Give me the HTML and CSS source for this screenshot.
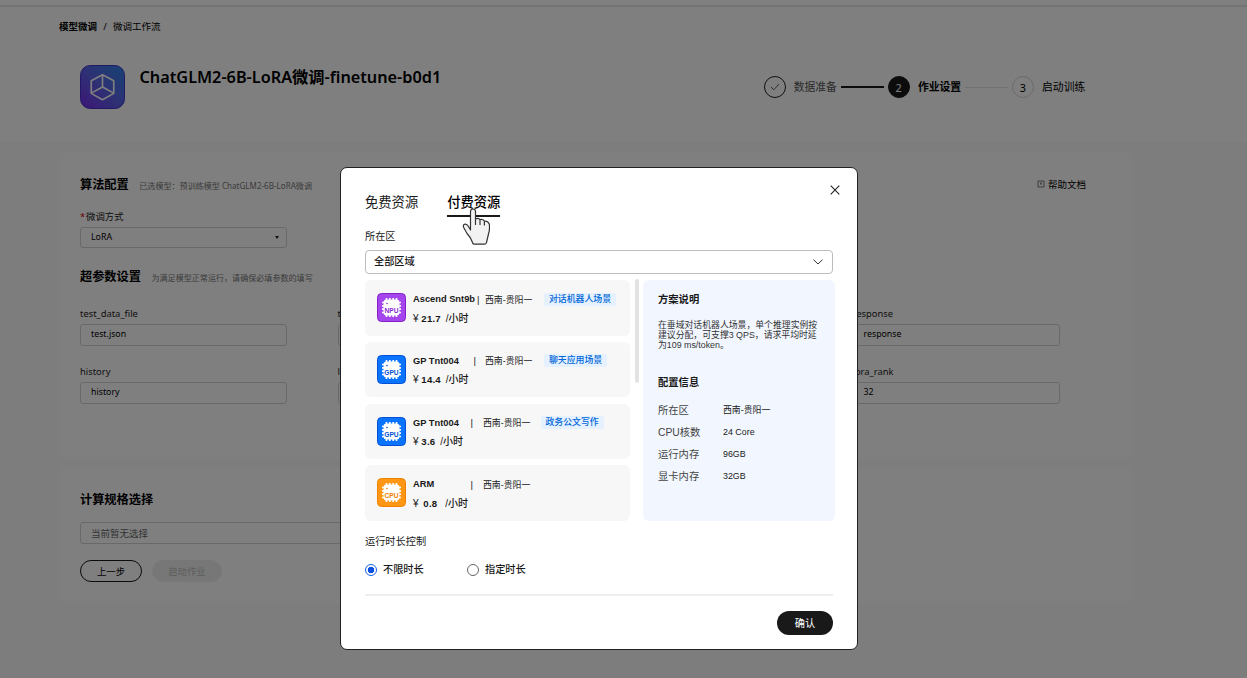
FILE: index.html
```html
<!DOCTYPE html>
<html lang="zh-CN">
<head>
    <meta charset="UTF-8">
    <meta name="viewport" content="width=device-width, initial-scale=1.0">
    <title>微调工作流</title>
    <link rel="stylesheet" href="styles.css">
</head>
<body>
    <div class="topbar"></div>
    <div class="header">
        <div class="breadcrumb"><b>模型微调</b><span class="sep">/</span><span>微调工作流</span></div>
        <div class="header-main">
            <svg class="logo" viewBox="0 0 46 45">
                <defs>
                    <linearGradient id="logoBg" x1="0" y1="1" x2="1" y2="0">
                        <stop offset="0" stop-color="#7a2cf0"/>
                        <stop offset="0.5" stop-color="#5c62e8"/>
                        <stop offset="1" stop-color="#2a86e8"/>
                    </linearGradient>
                </defs>
                <rect x="0.5" y="0.5" width="45" height="44" rx="10" fill="url(#logoBg)" stroke="#4030c8"/>
                <path d="M23 10 L34.500 16 V29 L23 35.500 L11.500 29 V16 Z M23 10 V22.500 M23 22.500 L12 28.500 M23 22.500 L34 28.500" fill="none" stroke="#fff" stroke-width="1.700" stroke-linejoin="round"/>
            </svg>
            <h1>ChatGLM2-6B-LoRA微调-finetune-b0d1</h1>
            <div class="steps">
                <div class="circle done"><svg viewBox="0 0 10 8"><path d="M1 4 L3.800 6.800 L9 1"/></svg></div>
                <span class="step-name gray">数据准备</span>
                <div class="line dark"></div>
                <div class="circle active">2</div>
                <span class="step-name bold">作业设置</span>
                <div class="line"></div>
                <div class="circle">3</div>
                <span class="step-name">启动训练</span>
            </div>
        </div>
    </div>

    <div class="card config">
        <div class="card-title">
            <h2>算法配置</h2><small>已选模型：预训练模型 ChatGLM2-6B-LoRA微调</small>
            <a class="help"><svg viewBox="0 0 8 8"><path d="M1 1 H7 V7 H1 Z M3 3 H5 M4 3 V5"/></svg>帮助文档</a>
        </div>
        <div class="field method">
            <label><i>*</i>微调方式</label>
            <div class="input select">LoRA<span class="caret"></span></div>
        </div>
        <div class="card-title params">
            <h2>超参数设置</h2><small>为满足模型正常运行，请确保必填参数的填写</small>
        </div>
        <div class="form-grid">
            <div class="field"><label>test_data_file</label><div class="input">test.json</div></div>
            <div class="field"><label>train_file</label><div class="input"></div></div>
            <div class="field last"><label>response</label><div class="input">response</div></div>
            <div class="field"><label>history</label><div class="input">history</div></div>
            <div class="field"><label>lr</label><div class="input"></div></div>
            <div class="field last"><label>lora_rank</label><div class="input">32</div></div>
        </div>
    </div>

    <div class="card spec">
        <h2>计算规格选择</h2>
        <div class="input wide">当前暂无选择</div>
        <div class="buttons">
            <button class="btn">上一步</button>
            <button class="btn disabled">启动作业</button>
        </div>
    </div>

    <div class="overlay">
        <div class="modal">
            <svg class="close" viewBox="0 0 10 10"><path d="M0.700 0.700 L9.300 9.300 M9.300 0.700 L0.700 9.300"/></svg>
            <div class="tabs">
                <div class="tab">免费资源</div>
                <div class="tab active">付费资源</div>
            </div>
            <svg class="hand" viewBox="0 0 28 38">
                <path d="M8.500 19 V3.500 Q8.500 1 11 1 Q13.500 1 13.500 3.500 V11 Q16 9.500 18 11.600 Q20.700 10.600 22.400 13 Q26 12.800 27.300 16 Q28 22 26.500 26 L24.500 34.500 Q24.200 36.200 22.500 36.200 H12 Q10.800 36.200 10.300 34 Q8.500 29 5 25.500 L1.700 19.500 Q0.500 16.500 3 16.200 Q5 16 6.500 18.500 L8.500 22 Z M13.500 11 V17 M18 11.600 V17 M22.400 13 V17.500" fill="#f2f2f2" stroke="#333" stroke-width="1.200" stroke-linejoin="round"/>
            </svg>
            <div class="label">所在区</div>
            <div class="region-select">全部区域<svg viewBox="0 0 10 6"><path d="M0.500 0.700 L5 5 L9.500 0.700"/></svg></div>

            <div class="content">
                <div class="list">
                    <div class="item">
                        <svg class="chip npu" viewBox="0 0 29 29">
                            <rect class="bg" x="0.500" y="0.500" width="28" height="28" rx="4"/>
                            <path class="pins" d="M9.500 5 V24 M12.800 5 V24 M16.200 5 V24 M19.500 5 V24 M5 9.500 H24 M5 12.800 H24 M5 16.200 H24 M5 19.500 H24"/>
                            <rect class="body" x="6.500" y="6.500" width="16" height="16" rx="3"/>
                            <circle class="dot" cx="10" cy="10.500" r="0.800"/>
                            <text x="14.500" y="19.500">NPU</text>
                        </svg>
                        <div class="info">
                            <div class="row"><b class="name n1">Ascend Snt9b</b><span class="bar">|</span><span class="zone">西南-贵阳一</span><span class="tag">对话机器人场景</span></div>
                            <div class="price">¥ <b>21.7</b><span>/小时</span></div>
                        </div>
                    </div>
                    <div class="item">
                        <svg class="chip gpu" viewBox="0 0 29 29">
                            <rect class="bg" x="0.500" y="0.500" width="28" height="28" rx="4"/>
                            <path class="pins" d="M9.500 5 V24 M12.800 5 V24 M16.200 5 V24 M19.500 5 V24 M5 9.500 H24 M5 12.800 H24 M5 16.200 H24 M5 19.500 H24"/>
                            <rect class="body" x="6.500" y="6.500" width="16" height="16" rx="3"/>
                            <circle class="dot" cx="10" cy="10.500" r="0.800"/>
                            <text x="14.500" y="19.500">GPU</text>
                        </svg>
                        <div class="info">
                            <div class="row"><b class="name n2">GP Tnt004</b><span class="bar">|</span><span class="zone">西南-贵阳一</span><span class="tag">聊天应用场景</span></div>
                            <div class="price">¥ <b>14.4</b><span>/小时</span></div>
                        </div>
                    </div>
                    <div class="item">
                        <svg class="chip gpu" viewBox="0 0 29 29">
                            <rect class="bg" x="0.500" y="0.500" width="28" height="28" rx="4"/>
                            <path class="pins" d="M9.500 5 V24 M12.800 5 V24 M16.200 5 V24 M19.500 5 V24 M5 9.500 H24 M5 12.800 H24 M5 16.200 H24 M5 19.500 H24"/>
                            <rect class="body" x="6.500" y="6.500" width="16" height="16" rx="3"/>
                            <circle class="dot" cx="10" cy="10.500" r="0.800"/>
                            <text x="14.500" y="19.500">GPU</text>
                        </svg>
                        <div class="info">
                            <div class="row"><b class="name n3">GP Tnt004</b><span class="bar">|</span><span class="zone">西南-贵阳一</span><span class="tag">政务公文写作</span></div>
                            <div class="price">¥ <b>3.6</b><span>/小时</span></div>
                        </div>
                    </div>
                    <div class="item">
                        <svg class="chip cpu" viewBox="0 0 29 29">
                            <rect class="bg" x="0.500" y="0.500" width="28" height="28" rx="4"/>
                            <path class="pins" d="M9.500 5 V24 M12.800 5 V24 M16.200 5 V24 M19.500 5 V24 M5 9.500 H24 M5 12.800 H24 M5 16.200 H24 M5 19.500 H24"/>
                            <rect class="body" x="6.500" y="6.500" width="16" height="16" rx="3"/>
                            <circle class="dot" cx="10" cy="10.500" r="0.800"/>
                            <text x="14.500" y="19.500">CPU</text>
                        </svg>
                        <div class="info">
                            <div class="row"><b class="name n3">ARM</b><span class="bar">|</span><span class="zone">西南-贵阳一</span></div>
                            <div class="price wide-price">¥ <b>0.8</b><span>/小时</span></div>
                        </div>
                    </div>
                </div>
                <div class="scroll"></div>
                <div class="detail">
                    <h3>方案说明</h3>
                    <p>在垂域对话机器人场景，单个推理实例按<br>建议分配，可支撑3 QPS，请求平均时延<br>为109 ms/token。</p>
                    <h3>配置信息</h3>
                    <dl>
                        <dt>所在区</dt><dd>西南-贵阳一</dd>
                        <dt>CPU核数</dt><dd>24 Core</dd>
                        <dt>运行内存</dt><dd>96GB</dd>
                        <dt>显卡内存</dt><dd>32GB</dd>
                    </dl>
                </div>
            </div>

            <div class="label duration">运行时长控制</div>
            <div class="radios">
                <div class="radio"><span class="dot-box on"></span>不限时长</div>
                <div class="radio"><span class="dot-box"></span>指定时长</div>
            </div>
            <div class="footer"><button class="confirm">确认</button></div>
        </div>
    </div>
</body>
</html>
```
FILE: styles.css
```css
* { box-sizing: border-box; }
body {
    margin: 0;
    height: 678px;
    overflow: hidden;
    background: #fbfbfb;
    color: #000;
    font-family: 'Noto Sans', 'Noto Sans CJK SC', sans-serif;
    font-size: 9.4px;
}
h1, h2, h3, p, dl, dd { margin: 0; }
button { font-family: inherit; padding: 0; }
.topbar { height: 7px; background: #fff; border-bottom: 2px solid #e8e8e8; }

.header { height: 135px; background: #fff; padding: 12px 59px 0; }
.breadcrumb { display: flex; height: 16px; line-height: 16px; font-size: 9.5px; }
.breadcrumb .sep { width: 16px; text-align: center; }
.header-main { display: flex; padding: 30px 0 0 21px; height: 75px; }
.logo { width: 45px; height: 44px; flex: none; }
h1 { margin-left: 14.5px; height: 24px; line-height: 24px; font-size: 16.25px; width: 624px; white-space: nowrap; font-weight: 600; }
.steps { display: flex; align-items: center; height: 44px; font-size: 10.8px; white-space: nowrap; }
.circle {
    display: flex;
    align-items: center;
    justify-content: center;
    width: 22px;
    height: 22px;
    border: 1px solid #d4d4d4;
    border-radius: 50%;
    flex: none;
}
.circle.done { border-color: #222; }
.circle.done svg { width: 10px; height: 8px; fill: none; stroke: #333; stroke-width: 0.8; }
.circle.active { background: #191919; border-color: #191919; color: #fff; }
.step-name { width: 43px; margin-left: 8.2px; line-height: 14px; margin-top: -1px; }
.step-name.gray { color: #555; }
.step-name.bold { font-weight: bold; }
.line { width: 43px; height: 1px; background: #e0e0e0; margin: 0 4px; }
.line.dark { height: 2px; background: #191919; }

.card { width: 1072px; margin-left: 60px; padding: 0 20px; background: #fff; border-radius: 6px; }
.config { height: 306px; margin-top: 11px; padding-top: 22px; }
h2 { font-size: 12.2px; line-height: 20px; font-weight: bold; white-space: nowrap; }
.card-title { display: flex; height: 20px; align-items: center; }
.card-title small { margin: 0 0 0 10.5px; font-size: 8.07px; color: #777; white-space: nowrap; }
.help { display: flex; align-items: center; gap: 3px; margin-left: auto; margin-right: 26px; margin-top: -2px; font-size: 9.5px; }
.help svg { width: 8px; height: 8px; fill: none; stroke: #444; stroke-width: 0.7; }
.field { width: 207px; }
.field label { display: block; height: 16px; line-height: 16px; color: #222; }
.field label i { color: #d00; font-style: normal; display: inline-block; width: 6px; }
.input {
    position: relative;
    height: 22px;
    line-height: 20px;
    border: 1px solid #d2d2d2;
    border-radius: 3px;
    padding-left: 10px;
    font-size: 8.8px;
    margin-top: 2px;
}
.method { margin-top: 14px; }
.method .input { height: 21px; line-height: 18px; }
.caret {
    position: absolute;
    right: 7px;
    top: 8px;
    border: 2px solid transparent;
    border-top: 3px solid #222;
    border-bottom: 0;
}
.params { margin-top: 19px; }
.form-grid { display: grid; grid-template-columns: repeat(4, 207px); column-gap: 50.5px; row-gap: 17.5px; margin-top: 19px; }
.form-grid .input { line-height: 19px; }
.last { grid-column: 4; }

.spec { height: 135px; margin-top: 9px; padding-top: 22px; }
.wide { width: 600px; font-size: 9.5px; line-height: 21px; color: #666; margin-top: 12px; }
.buttons { display: flex; gap: 10px; margin-top: 16px; }
.btn { width: 62px; height: 22px; border: 1px solid #191919; border-radius: 11px; background: #fff; font-size: 9.4px; color: #000; }
.btn.disabled { width: 70px; border-color: #efefef; background: #efefef; color: #bbb; }

.overlay { position: fixed; inset: 0; background: rgba(0, 0, 0, 0.5); padding: 167px 0 0 340px; }
.modal {
    position: relative;
    width: 518px;
    height: 483px;
    padding: 22px 22px 0 24px;
    background: #fff;
    border: 1px solid #222;
    border-radius: 7px;
    font-family: 'Liberation Sans', 'Noto Sans CJK SC', sans-serif;
    color: #191919;
}
.close { position: absolute; top: 17px; right: 17px; width: 10px; height: 10px; fill: none; stroke: #222; stroke-width: 1.1; }
.tabs { display: flex; gap: 29px; }
.tab { height: 27px; line-height: 25px; font-size: 13.3px; }
.tab.active { font-weight: 500; border-bottom: 2px solid #191919; color: #000; }
.hand { position: absolute; left: 121px; top: 40px; width: 28px; height: 38px; }
.label { font-size: 10.2px; height: 16px; line-height: 16px; margin-top: 12px; }
.region-select {
    display: flex;
    align-items: center;
    justify-content: space-between;
    width: 468px;
    height: 24px;
    line-height: 20px;
    margin-top: 5px;
    padding: 0 9px 0 8px;
    border: 1px solid #bcbcbc;
    border-radius: 4px;
    font-size: 10.2px;
    font-weight: 500;
}
.region-select svg { width: 10px; height: 6px; fill: none; stroke: #333; stroke-width: 1; }

.content { display: flex; height: 241px; margin-top: 6px; }
.list { display: flex; flex-direction: column; gap: 6.3px; width: 265.5px; }
.item { display: flex; height: 55.5px; padding: 13px 0 0 12px; background: #f7f7f7; border-radius: 6px; }
.chip { width: 29px; height: 29px; flex: none; }
.chip .pins { fill: none; stroke: #fff; stroke-width: 1.7; }
.chip .body { fill: #fff; }
.chip text { font: bold 6.6px 'Liberation Sans', sans-serif; text-anchor: middle; }
.npu .bg { fill: #a445ee; stroke: #8320c8; }
.npu text, .npu .dot { fill: #8a28d0; }
.gpu .bg { fill: #0a74ff; stroke: #0050d8; }
.gpu text, .gpu .dot { fill: #0050d0; }
.cpu .bg { fill: #ff9614; stroke: #ee8200; }
.cpu text, .cpu .dot { fill: #ee8000; }
.info { margin-left: 7px; font-size: 9.3px; }
.row { display: flex; align-items: center; height: 13px; margin-top: -0.5px; white-space: nowrap; }
.name { font-size: 9.3px; }
.n1 { width: 64px; }
.n2 { width: 60.5px; }
.n3 { width: 57.5px; }
.bar { width: 3px; font-size: 9.5px; }
.zone { width: 48px; margin-left: 5px; font-size: 8.9px; }
.n2 ~ .zone { margin-left: 8.5px; }
.n3 ~ .zone { margin-left: 9.5px; }
.tag { height: 13px; line-height: 13px; margin: 0 0 0 11px; padding: 0 5px; font-size: 8.9px; font-weight: 500; color: #0067d8; background: #e5f1ff; border-radius: 2px; }
.n3 ~ .tag { margin-left: 9.5px; }
.price { height: 14px; line-height: 14px; margin-top: 6px; font-size: 10px; font-weight: 500; }
.price b { font-size: 9.6px; letter-spacing: 0.2px; }
.price span { margin-left: 5px; }
.wide-price b { margin: 0 3px 0 2px; }
.scroll { width: 4px; height: 104px; margin: -1px 4px 0 5px; background: #e3e3e3; border-radius: 2px; }
.detail { width: 192px; flex: none; padding: 12px 15px; background: #f2f7ff; border-radius: 6px; white-space: nowrap; }
h3 { font-size: 10.3px; line-height: 16px; font-weight: bold; }
.detail p { margin: 12px 0 24px; font-size: 8.85px; line-height: 10.2px; color: #333; }
dl { display: grid; grid-template-columns: 65px auto; grid-auto-rows: 22px; align-items: center; margin-top: 8px; }
dt { font-size: 10.3px; color: #444; }
dd { font-size: 8.9px; }

.duration { margin-top: 13px; }
.radios { display: flex; margin-top: 12px; font-size: 10.2px; font-weight: 500; }
.radio { display: flex; align-items: center; width: 102px; height: 16px; line-height: 14px; }
.dot-box { width: 12px; height: 12px; margin-right: 6px; border: 1px solid #666; border-radius: 50%; }
.dot-box.on { border-color: #1464e8; background: radial-gradient(circle, #0b50e0 0 3px, #fff 3.6px); }
.footer { display: flex; justify-content: flex-end; width: 468px; margin-top: 16px; padding-top: 15px; border-top: 2px solid #eee; }
.confirm { width: 56px; height: 24px; padding-bottom: 2px; border: 0; border-radius: 12px; background: #191919; color: #fff; font-size: 10.2px; }
```
